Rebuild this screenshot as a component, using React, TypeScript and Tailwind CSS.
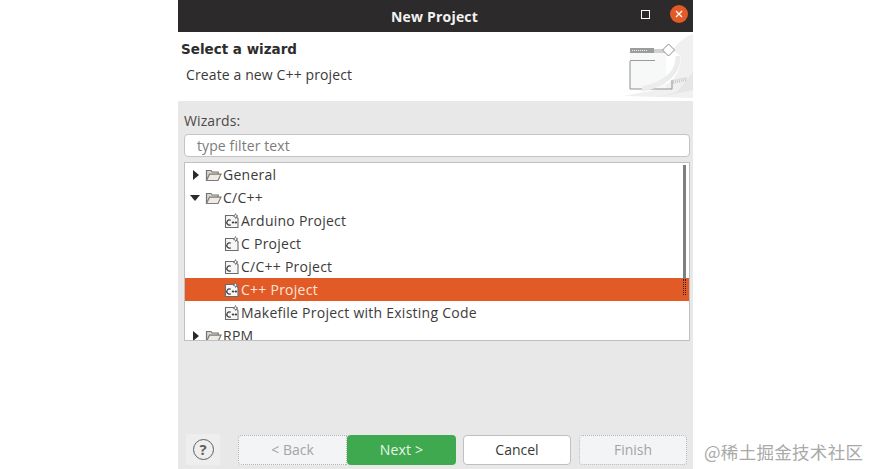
import React from "react";

function Folder() {
  return (
    <svg width="17" height="14" viewBox="0 0 17 14" className="shrink-0">
      <path d="M1.5 12.5V2.5h4.5l1.2 1.5h6V6" fill="#d9d6d1" stroke="#77736f" strokeWidth="1.2" />
      <path d="M1.5 12.5L4.5 6.2h11.5l-3 6.3z" fill="#eeebe6" stroke="#7f7b77" strokeWidth="1.2" />
    </svg>
  );
}

function FileIcon({ label }: { label: string }) {
  return (
    <svg width="16" height="16" viewBox="0 0 16 16" className="shrink-0">
      <path d="M1.5 2.5h9l3.5 3v9h-12.500z" fill="#f6f6f6" stroke="#6b6b6e" strokeWidth="1.1" />
      <path d="M11.500 0.500l.7 1.800 1.800.7-1.800.7-.7 1.800-.7-1.800-1.800-.7 1.800-.7z" fill="#fff" stroke="#6b6b6e" strokeWidth="0.8" />
      <path d="M6.800 7.300a2.600 2.600 0 1 0 0 4.400" fill="none" stroke="#3f4044" strokeWidth="1.300" />
      {label === "c++" && <path d="M7.800 9.500h2.400M9 8.300v2.400M10.700 9.500h2.400M11.900 8.300v2.400" stroke="#3f4044" strokeWidth="1" />}
    </svg>
  );
}

function Row({ label, level, arrow, icon, selected }: { label: string; level: number; arrow?: "right" | "down"; icon: "folder" | "c" | "c++"; selected?: boolean }) {
  return (
    <div className={`flex h-[23px] shrink-0 items-center ${selected ? "bg-[#e25a26] text-[#f8e6dc]" : "text-[#3d3c3a]"}`}>
      <div className={level === 0 ? "flex w-[20px] shrink-0 justify-center" : "w-[39px] shrink-0"}>
        {arrow === "right" && <div className="ml-[1px] h-0 w-0 border-y-[5px] border-l-[6px] border-y-transparent border-l-[#2b2a29]" />}
        {arrow === "down" && <div className="h-0 w-0 border-x-[5px] border-t-[6px] border-x-transparent border-t-[#2b2a29]" />}
      </div>
      {icon === "folder" ? <Folder /> : <FileIcon label={icon} />}
      <span className="ml-[1px] text-[14px] leading-none tracking-[0.25px]">{label}</span>
    </div>
  );
}

export default function App() {
  return (
    <div className="h-[469px] w-[870px] overflow-hidden bg-white font-['Open_Sans','Noto_Sans',sans-serif]">
      <div className="ml-[178px] flex h-[469px] w-[515px] flex-col bg-[#e8e8e8]">
        <header className="relative flex h-[32px] shrink-0 items-center justify-center bg-[#2c2a2a]">
          <span className="-translate-x-[1px] text-[14px] font-bold tracking-[0.2px] text-[#f2f2f2]">New Project</span>
          <div className="absolute left-[463px] top-[10px] h-[9px] w-[9px] border-[1.5px] border-white" />
          <div className="absolute left-[492px] top-[5px] flex h-[18px] w-[18px] items-center justify-center rounded-full bg-[#e25a26]">
            <svg width="10" height="10" viewBox="0 0 10 10"><path d="M2 2l6 6M8 2l-6 6" stroke="#fff" strokeWidth="1.3" /></svg>
          </div>
        </header>

        <section className="relative flex h-[69px] shrink-0 flex-col bg-white">
          <h1 className="ml-[3px] mt-[8px] font-['DejaVu_Sans',sans-serif] text-[13.5px] font-bold leading-[18px] text-[#2e2d2c]">Select a wizard</h1>
          <p className="ml-[8px] mt-[8px] text-[14px] leading-[18px] tracking-[0.12px] text-[#3a3938]">Create a new C++ project</p>
          <svg width="70" height="66" viewBox="0 0 70 66" className="absolute right-0 top-0">
            <path d="M70 2C60 6 54 12 50 18L58 24C58 40 50 56 22 60L0 64L70 66z" fill="#f0f0f0" />
            <path d="M30 66L70 58V40L54 60z" fill="#e6e6e6" />
            <rect x="7" y="21" width="36" height="36" fill="#f7f8f8" />
            <path d="M7 29V57H49V48" fill="none" stroke="#909090" strokeWidth="1" />
            <path d="M7 28.500H32" stroke="#9a9a9a" strokeWidth="1" />
            <rect x="7" y="16" width="24" height="5" fill="#9c9c9c" />
            <path d="M31 17h10l3 4H31z" fill="#d0d0d0" />
            <path d="M9 18.500h16" stroke="#eee" strokeDasharray="1 1" />
            <path d="M39.500 18l6-6 6 6-6 6z" fill="#fff" stroke="#8a8a8a" strokeWidth="1" />
            <path d="M55 24c1 14-10 28-36 33" fill="none" stroke="#ececec" strokeWidth="5" />
            <path d="M50 50l14-3" stroke="#c9c9c9" strokeWidth="4" strokeDasharray="1 1" />
          </svg>
        </section>

        <main className="flex min-h-0 flex-1 flex-col pl-[6px] pr-[3px]">
          <label className="mt-[10px] text-[14px] leading-[19px] tracking-[0.1px] text-[#4b4a49]">Wizards:</label>
          <div className="mt-[4px] flex h-[23px] shrink-0 items-center rounded-[4px] border border-[#c4c4c4] bg-white pl-[12px] text-[14px] tracking-[0.1px] text-[#7d7c7b]">type filter text</div>
          <div className="relative mt-[5px] flex h-[179px] shrink-0 flex-col overflow-hidden border border-[#c0c0c0] bg-white">
            <Row label="General" level={0} arrow="right" icon="folder" />
            <Row label="C/C++" level={0} arrow="down" icon="folder" />
            <Row label="Arduino Project" level={1} icon="c++" />
            <Row label="C Project" level={1} icon="c" />
            <Row label="C/C++ Project" level={1} icon="c" />
            <Row label="C++ Project" level={1} icon="c++" selected />
            <Row label="Makefile Project with Existing Code" level={1} icon="c++" />
            <Row label="RPM" level={0} arrow="right" icon="folder" />
            <div className="absolute left-[498px] top-[2px] h-[114px] w-[3px] bg-[#7f7f7f]" />
            <div className="absolute left-[498px] top-[116px] h-[16px] w-[3px] border-x border-dotted border-[#2a2420]" />
          </div>
        </main>

        <footer className="flex h-[34px] shrink-0 items-start pl-[8px]">
          <button className="flex h-[31px] w-[34px] -translate-y-[1px] items-center justify-center bg-[#eeeeee]">
            <span className="flex h-[21px] w-[21px] items-center justify-center rounded-full border-[1.5px] border-[#5f5f5f] text-[15px] font-bold leading-none text-[#5f5f5f]">?</span>
          </button>
          <button className="ml-[18px] h-[30px] w-[109px] rounded-l-[4px] border border-dotted border-[#b5b5b5] bg-[#f3f4f5] pb-[2px] text-[14px] text-[#a4a4a4]">&lt; Back</button>
          <button className="h-[30px] w-[109px] rounded-[4px] bg-[#3fa950] pb-[2px] text-[14px] tracking-[0.2px] text-[#e9f5ea]">Next &gt;</button>
          <button className="ml-[7px] h-[30px] w-[108px] rounded-[4px] border border-[#c0c0c0] bg-white pb-[2px] text-[14px] text-[#3a3938]">Cancel</button>
          <button className="ml-[8px] h-[30px] w-[108px] rounded-[4px] border border-dotted border-[#b5b5b5] bg-[#f3f4f5] pb-[2px] text-[14px] text-[#a4a4a4]">Finish</button>
        </footer>
      </div>
      <div className="absolute left-[704px] top-[441px] font-['Noto_Sans_CJK_SC',sans-serif] text-[17.5px] leading-[22px] tracking-[0.3px] text-[#a9a9a9]">@稀土掘金技术社区</div>
    </div>
  );
}
